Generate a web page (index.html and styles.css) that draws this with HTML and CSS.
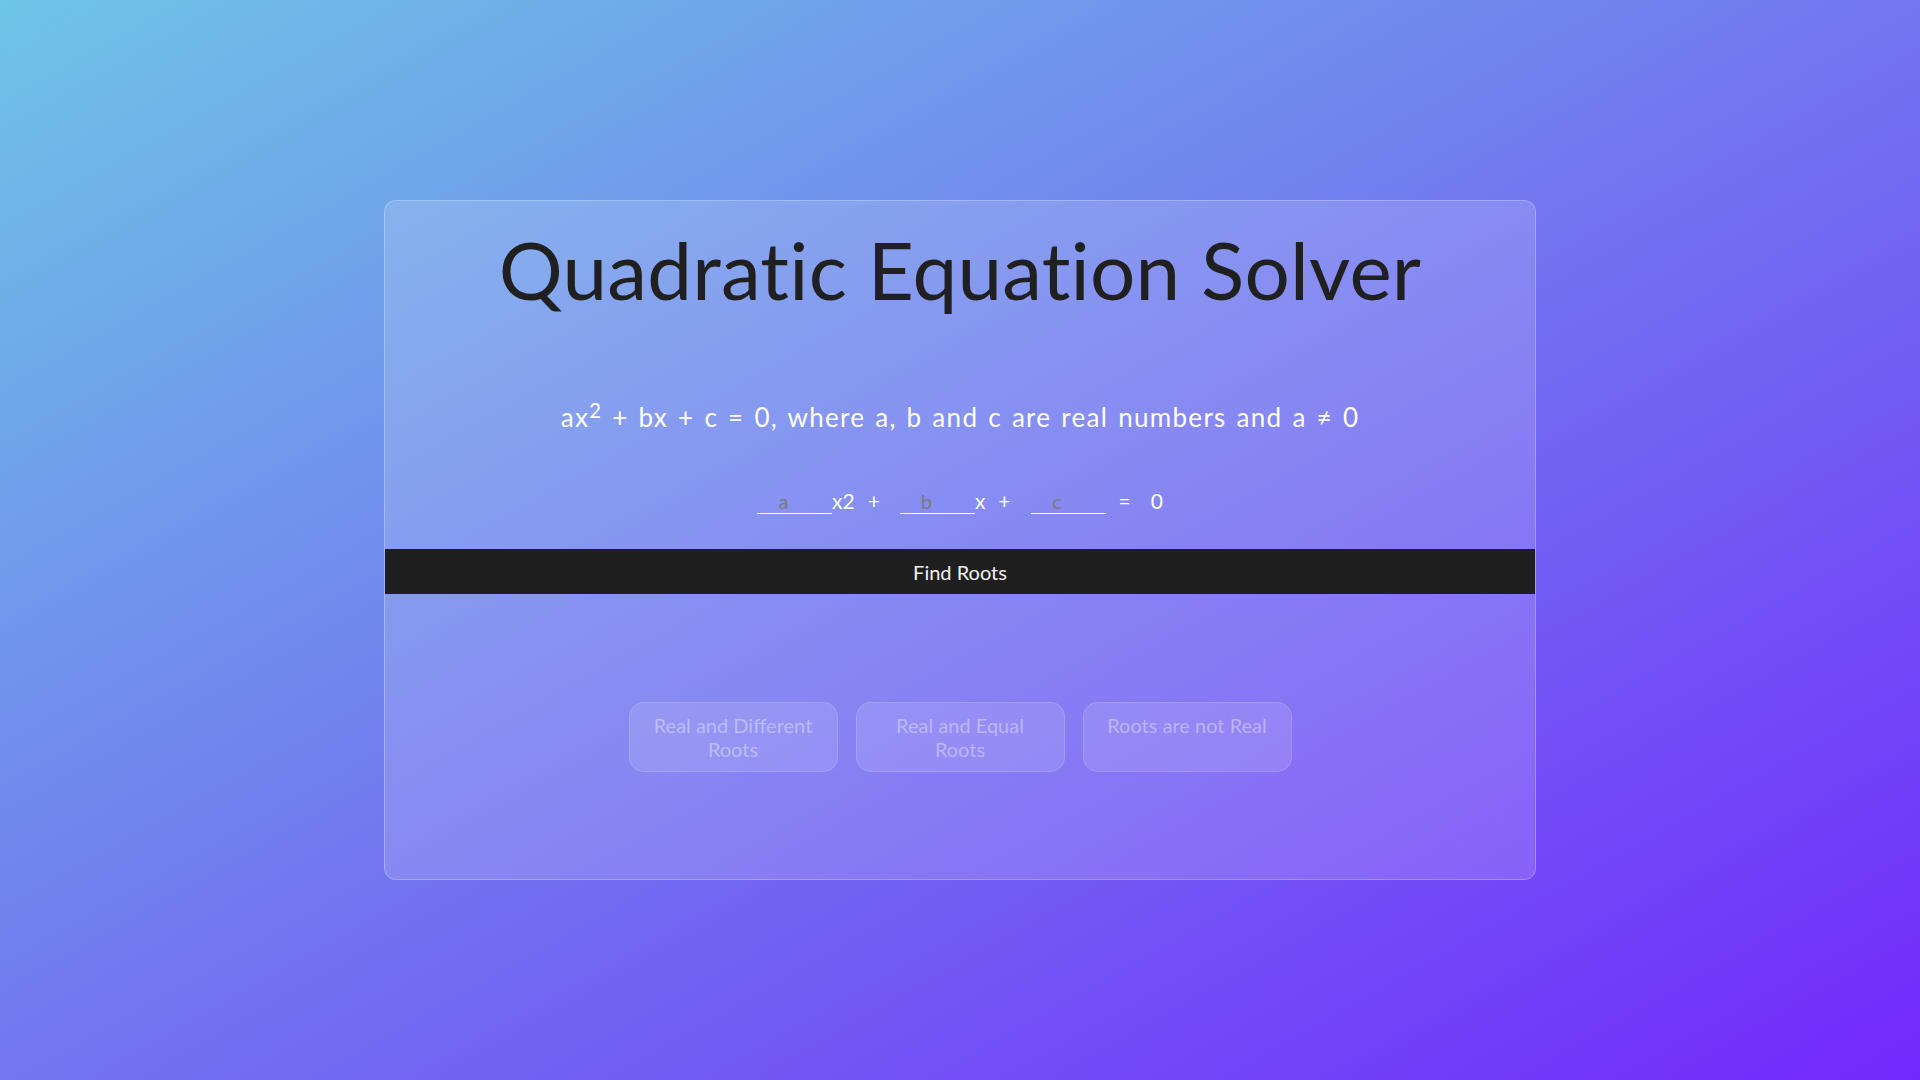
FILE: index.html
```html
<!DOCTYPE html>
<html lang="en">
<head>
<meta charset="utf-8">
<title>Quadratic Equation Solver</title>
<link rel="stylesheet" href="styles.css">
</head>
<body>
<main class="card">
  <h1 class="title">Quadratic Equation Solver</h1>
  <p class="subtitle">ax<sup>2</sup> + bx + c = 0, where a, b and c are real numbers and a &ne; 0</p>
  <div class="equation">
    <input class="coef" type="text" placeholder="a">
    <span class="var">x2</span><span class="op">+</span>
    <input class="coef" type="text" placeholder="b">
    <span class="var">x</span><span class="op">+</span>
    <input class="coef" type="text" placeholder="c">
    <span class="op">=</span><span class="var">0</span>
  </div>
  <button class="find">Find Roots</button>
  <div class="results">
    <button class="result" disabled>Real and Different Roots</button>
    <button class="result" disabled>Real and Equal Roots</button>
    <button class="result" disabled>Roots are not Real</button>
  </div>
</main>
</body>
</html>
```

FILE: styles.css
```css
* {
  box-sizing: border-box;
}

html, body {
  margin: 0;
  padding: 0;
  height: 100%;
}

body {
  font-family: "Lato", "Open Sans", sans-serif;
  background: linear-gradient(to bottom right, #6ec5e6 0%, #7276f0 50%, #7228fc 100%);
  display: flex;
  align-items: center;
  justify-content: center;
  min-height: 100vh;
}

.card {
  width: 1152px;
  height: 680px;
  background: rgba(255, 255, 255, 0.15);
  border: 1px solid rgba(255, 255, 255, 0.25);
  border-radius: 12px;
  display: flex;
  flex-direction: column;
  align-items: center;
  overflow: hidden;
}

.title {
  margin: 20px 0 0;
  font-size: 80px;
  line-height: 96px;
  font-weight: 400;
  color: #202020;
  letter-spacing: 0.2px;
}

.subtitle {
  margin: 85px 0 0;
  font-size: 26px;
  line-height: 31px;
  letter-spacing: 1.3px;
  word-spacing: 2px;
  color: #ffffff;
}

.subtitle sup {
  font-size: 0.78em;
  line-height: 0;
  vertical-align: 0.45em;
}

.equation {
  margin-top: 55px;
  display: flex;
  align-items: baseline;
  color: #ffffff;
  font-size: 21px;
}

.coef {
  width: 75px;
  padding: 0 22px 0 0;
  border: none;
  border-bottom: 1px solid #ffffff;
  background: transparent;
  font-family: inherit;
  font-size: 20px;
  line-height: 24px;
  text-align: center;
  color: #333;
  outline: none;
}

.coef::placeholder {
  color: #7a7a7a;
}

.op {
  margin: 0 20px 0 13px;
}

.find {
  margin-top: 35px;
  width: 100%;
  height: 45px;
  border: none;
  background: #1f1f1f;
  color: #f2f2f2;
  font-family: inherit;
  font-size: 20px;
}

.results {
  margin-top: 108px;
  display: flex;
  gap: 18px;
}

.result {
  width: 209px;
  padding: 10px 14px;
  border: 1px solid rgba(255, 255, 255, 0.14);
  border-radius: 15px;
  background: rgba(255, 255, 255, 0.12);
  color: rgba(255, 255, 255, 0.38);
  font-family: inherit;
  font-size: 20px;
  line-height: 24px;
  display: flex;
  align-items: flex-start;
  justify-content: center;
  text-align: center;
}
```
